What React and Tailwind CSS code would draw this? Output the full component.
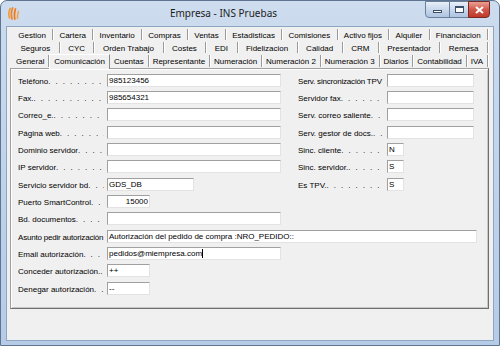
import React from 'react';

const LEADER = ' .'.repeat(24);

const tabRows = [
  ['Gestion', 'Cartera', 'Inventario', 'Compras', 'Ventas', 'Estadisticas', 'Comisiones', 'Activo fijos', 'Alquiler', 'Financiacion'],
  ['Seguros', 'CYC', 'Orden Trabajo', 'Costes', 'EDI', 'Fidelizacion', 'Calidad', 'CRM', 'Presentador', 'Remesa'],
  ['General', 'Comunicación', 'Cuentas', 'Representante', 'Numeración', 'Numeración 2', 'Numeración 3', 'Diarios', 'Contabilidad', 'IVA'],
];

// left field, optional right field
const rows = [
  [{ label: 'Teléfono', value: '985123456', w: 'w-[174px]' }, { label: 'Serv. sincronización TPV', dots: false, w: 'w-[87px]' }],
  [{ label: 'Fax.', value: '985654321', w: 'w-[174px]' }, { label: 'Servidor fax', w: 'w-[87px]' }],
  [{ label: 'Correo_e.', w: 'w-[174px]' }, { label: 'Serv. correo saliente', w: 'w-[87px]' }],
  [{ label: 'Página web', w: 'w-[174px]' }, { label: 'Serv. gestor de docs.', w: 'w-[87px]' }],
  [{ label: 'Dominio servidor', w: 'w-[174px]' }, { label: 'Sinc. cliente', value: 'N', w: 'w-[17px]' }],
  [{ label: 'IP servidor', w: 'w-[174px]' }, { label: 'Sinc. servidor.', value: 'S', w: 'w-[17px]' }],
  [{ label: 'Servicio servidor bd', value: 'GDS_DB', w: 'w-[87px]' }, { label: 'Es TPV.', value: 'S', w: 'w-[17px]' }],
  [{ label: 'Puerto SmartControl', value: '15000', w: 'w-[43px]', right: true }],
  [{ label: 'Bd. documentos', w: 'w-[174px]' }],
  [{ label: 'Asunto pedir autorización', dots: false, value: 'Autorización del pedido de compra :NRO_PEDIDO::', w: 'w-[370px]' }],
  [{ label: 'Email autorización', value: 'pedidos@miempresa.com', w: 'w-[174px]', caret: true }],
  [{ label: 'Conceder autorización.', value: '++', w: 'w-[43px]' }],
  [{ label: 'Denegar autorización', value: '--', w: 'w-[43px]' }],
];

function Field({ label, value = '', w, dots = true, right = false, caret = false }) {
  return (
    <div className="flex h-[13px] shrink-0">
      <div className="mr-[3px] flex w-[86px] shrink-0 overflow-hidden whitespace-nowrap pt-[2px] text-[8px] leading-[11px]">
        <span className={`shrink-0 ${dots ? '' : 'tracking-[-0.2px]'}`}>{label}</span>
        {dots && <span className="min-w-0 flex-1 overflow-hidden tracking-[1.4px]">{LEADER}</span>}
      </div>
      <div
        className={`${w} flex h-[13px] shrink-0 items-center overflow-hidden whitespace-nowrap border border-[#a0a0a0] border-b-[#e3e3e3] border-r-[#e3e3e3] bg-white px-[1px] text-[8px] leading-[11px] ${right ? 'justify-end' : ''}`}
      >
        <span>{value}</span>
        {caret && <span className="h-[9px] w-px bg-black" />}
      </div>
    </div>
  );
}

function AppIcon() {
  return (
    <svg width="12" height="13" viewBox="0 0 12 13">
      <path d="M1.5 11 C0.5 8 0.8 4 2.2 1.5" stroke="#f29a3a" strokeWidth="1.6" fill="none" strokeLinecap="round" />
      <path d="M4 12 C3 8.5 3.3 4 4.6 1" stroke="#f08424" strokeWidth="1.8" fill="none" strokeLinecap="round" />
      <path d="M6.8 12 C6.2 8.5 6.6 4.5 7.4 2" stroke="#ef7a1a" strokeWidth="1.8" fill="none" strokeLinecap="round" />
      <path d="M9.5 11.5 C9.3 9 9.7 6.5 10.4 4.5" stroke="#f3a24a" strokeWidth="1.6" fill="none" strokeLinecap="round" />
    </svg>
  );
}

function TitleBar() {
  return (
    <div className="flex h-[25px] items-start">
      <div className="ml-[2px] mt-[6px] w-[14px] shrink-0">
        <AppIcon />
      </div>
      <div className="flex-1 pt-[5px] text-center font-['Noto_Sans',sans-serif] text-[10px] leading-[14px] text-[#1c1c1c]">
        Empresa - INS Pruebas
      </div>
      <div className="flex shrink-0">
        <div className="flex h-[17px] w-[25px] items-center justify-center rounded-bl-[4px] border border-[#6a7f9c] bg-gradient-to-b from-[#e8eff8] via-[#c9d8ec] to-[#aec4e0]">
          <div className="mt-[4px] h-[3px] w-[9px] border border-[#3b4f6b] bg-white" />
        </div>
        <div className="-ml-px flex h-[17px] w-[20px] items-center justify-center border border-[#6a7f9c] bg-gradient-to-b from-[#e8eff8] via-[#c9d8ec] to-[#aec4e0]">
          <div className="h-[7px] w-[9px] border border-t-2 border-[#3b4f6b] bg-white" />
        </div>
        <div className="-ml-px flex h-[17px] w-[22px] items-center justify-center rounded-br-[4px] border border-[#7a2a22] bg-gradient-to-b from-[#e8a093] via-[#d0574a] to-[#c0392b]">
          <svg width="9" height="8" viewBox="0 0 9 8">
            <path d="M1 1 L8 7 M8 1 L1 7" stroke="#fff" strokeWidth="2" />
          </svg>
        </div>
      </div>
      <div className="w-[4px]" />
    </div>
  );
}

function TabRow({ tabs, last }) {
  return (
    <div className={`ml-[2px] mr-[1px] flex whitespace-nowrap ${last ? 'h-[14px]' : 'h-[13px]'}`}>
      {tabs.map((t) => {
        const active = t === 'Comunicación';
        if (active) {
          return (
            <div
              key={t}
              className="relative z-10 -mb-px flex-auto border-l border-r border-t border-l-white border-r-[#8a8a8a] border-t-white bg-[#f0f0f0] px-[2px] pt-px text-center text-[8px] leading-[11px]"
            >
              {t}
            </div>
          );
        }
        return (
          <div key={t} className="flex flex-auto items-stretch py-[1px]">
            <div className="flex-1 border-r border-r-[#9a9a9a] px-[2px] pt-px text-center text-[8px] leading-[11px] shadow-[1px_0_0_#ffffff]">
              {t}
            </div>
          </div>
        );
      })}
    </div>
  );
}

export default function App() {
  return (
    <div className="h-[346px] w-[500px] overflow-hidden font-['Liberation_Sans',Arial,sans-serif] text-black">
      <div className="flex h-full flex-col rounded-t-[7px] border border-[#5f7490] bg-gradient-to-b from-[#cddcee] via-[#bfd3ea] to-[#b6cce6] px-[5px] pb-[4px]">
        <TitleBar />
        <div className="flex-1 border border-[#8fa6c2] bg-[#f0f0f0] pl-[3px] pr-[4px] pt-px">
          {tabRows.map((r, i) => (
            <TabRow key={i} tabs={r} last={i === 2} />
          ))}
          <div className="h-[241px] border border-[#a0a0a0] border-b-[#6f6f6f] border-r-[#6f6f6f] pl-[7px] pt-[5px] shadow-[inset_1px_1px_0_#ffffff,inset_-1px_-1px_0_#c8c8c8]">
            {rows.map((r, i) => (
              <div key={i} className={`flex ${i % 3 === 2 ? 'mb-[5px]' : 'mb-[4px]'}`}>
                {r[1] ? (
                  <>
                    <div className="w-[280px] shrink-0">
                      <Field {...r[0]} />
                    </div>
                    <Field {...r[1]} />
                  </>
                ) : (
                  <Field {...r[0]} />
                )}
              </div>
            ))}
          </div>
        </div>
      </div>
    </div>
  );
}
